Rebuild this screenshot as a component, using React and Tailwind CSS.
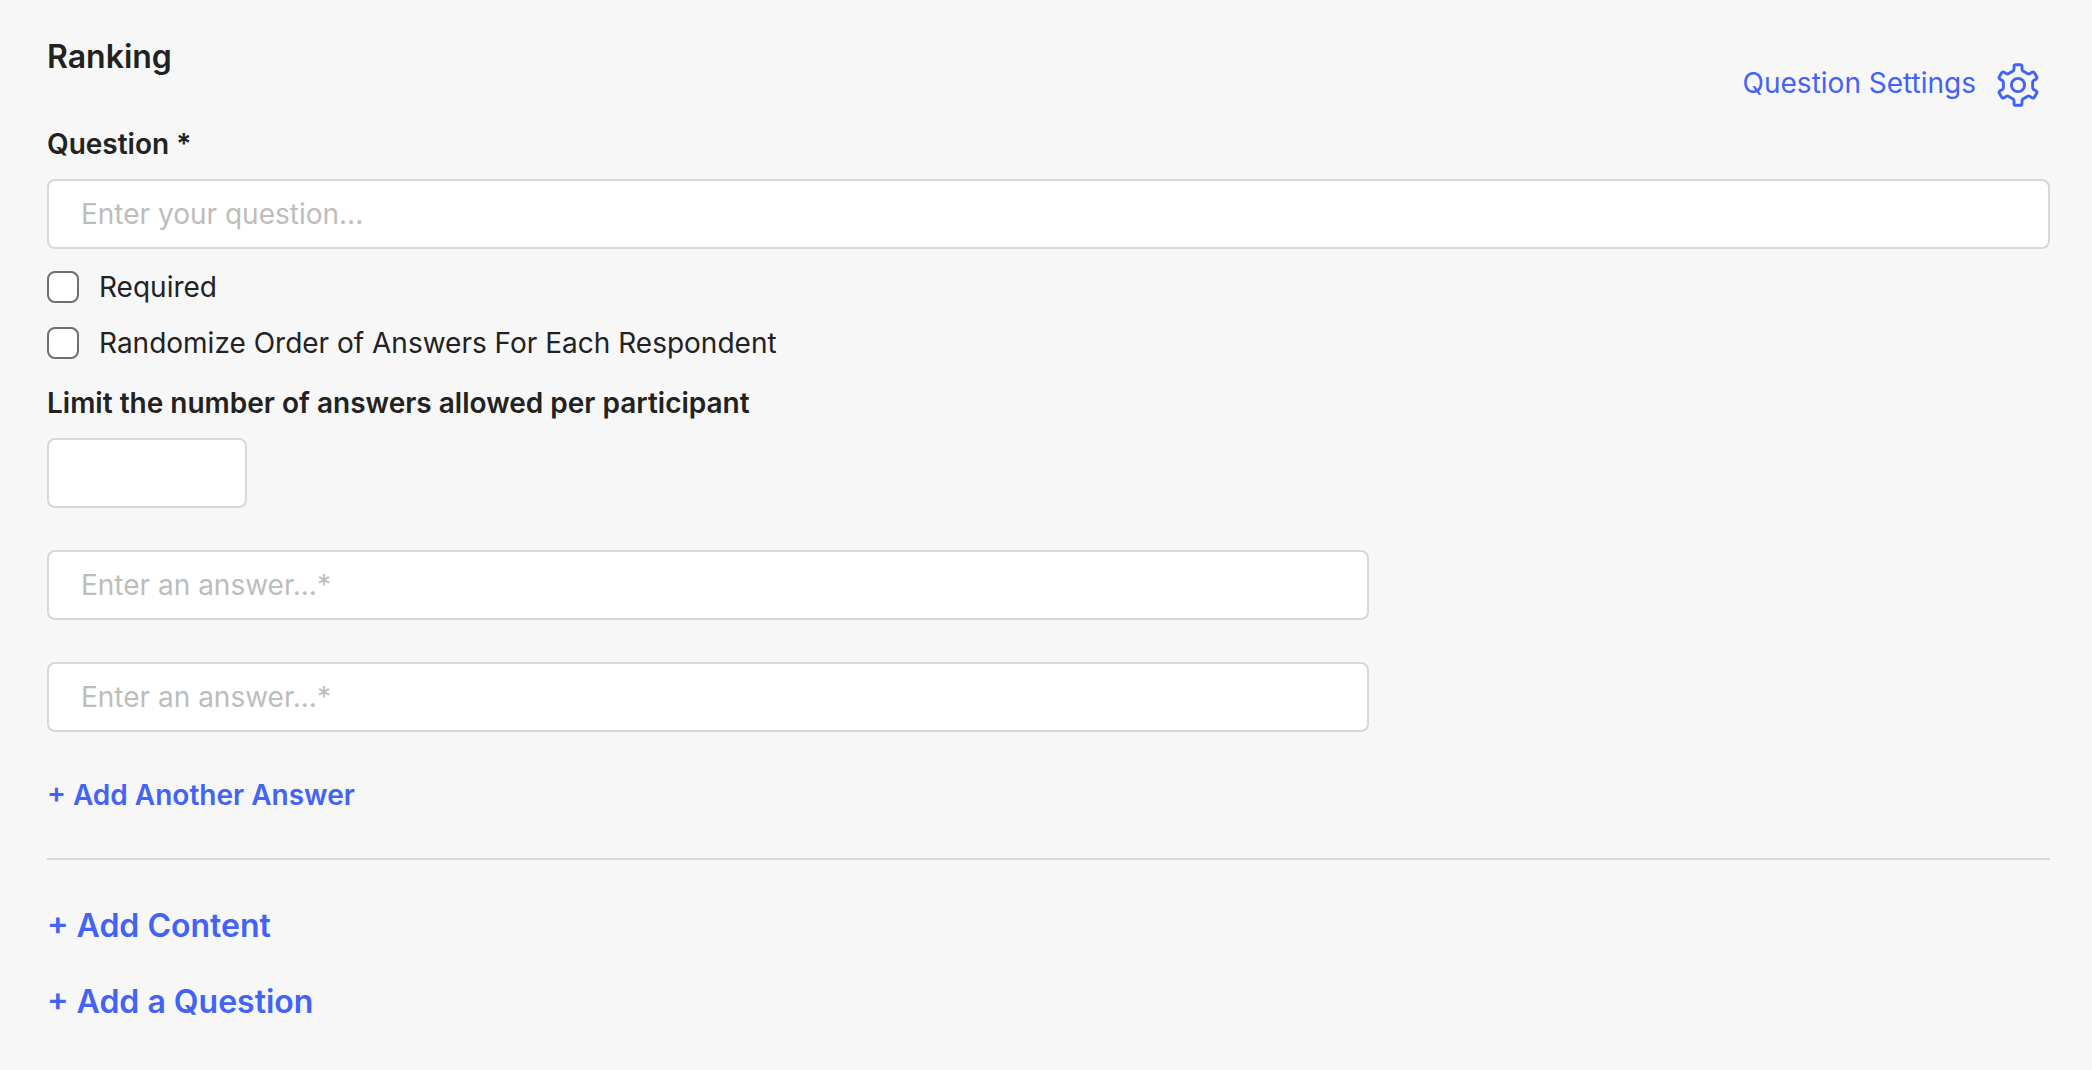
import React from "react";

const round = (n) => Math.round(n * 100) / 100;

// Outline of a six-toothed gear centred on 24,24, with rounded corners.
function gearPath() {
  const tooth = [
    { x: -4, y: -14.6, r: 1.1 },
    { x: -4, y: -20.3, r: 1.9 },
    { x: 4, y: -20.3, r: 1.9 },
    { x: 4, y: -14.6, r: 1.1 },
  ];
  const points = [];
  for (let i = 0; i < 6; i++) {
    const a = (i * Math.PI) / 3;
    tooth.forEach(({ x, y, r }) =>
      points.push({
        x: 24 + x * Math.cos(a) - y * Math.sin(a),
        y: 24 + x * Math.sin(a) + y * Math.cos(a),
        r,
      })
    );
  }
  const toward = (from, to) => {
    const d = Math.hypot(to.x - from.x, to.y - from.y);
    return `${round(from.x + ((to.x - from.x) * from.r) / d)} ${round(
      from.y + ((to.y - from.y) * from.r) / d
    )}`;
  };
  return (
    points
      .map((p, i) => {
        const prev = points[(i + points.length - 1) % points.length];
        const next = points[(i + 1) % points.length];
        return `${i ? "L" : "M"}${toward(p, prev)}Q${round(p.x)} ${round(p.y)} ${toward(p, next)}`;
      })
      .join("") + "Z"
  );
}

function GearIcon() {
  return (
    <svg viewBox="1 1 46 46" className="size-[46px]" fill="none" stroke="currentColor" strokeWidth="2.9" aria-hidden="true">
      <path d={gearPath()} />
      <circle cx="24" cy="24" r="6.6" />
    </svg>
  );
}

const field =
  "block h-[70px] rounded-lg border-2 border-[#d8d8d8] bg-white px-8 text-[28px] text-[#222] placeholder:text-[#bdbdbd]";

function Check({ id, children }) {
  return (
    <div className="flex items-center gap-5">
      <input
        id={id}
        type="checkbox"
        className="size-8 shrink-0 appearance-none rounded-lg border-2 border-[#6f6f6f] bg-white checked:bg-[#4263f5]"
      />
      <label htmlFor={id}>{children}</label>
    </div>
  );
}

export default function App() {
  return (
    <main className="min-h-screen bg-[#f7f7f7] pt-[33px] pr-[42px] pb-10 pl-[47px] font-['Inter',sans-serif] text-[28px] leading-[42px] text-[#222]">
      <header className="flex items-start justify-between">
        <div>
          <h1 className="text-[32px] leading-[48px] font-semibold">Ranking</h1>
          <label htmlFor="question" className="mt-[42px] block font-semibold">
            Question *
          </label>
        </div>
        <button type="button" className="mt-[29px] mr-[9px] flex items-start gap-[19px] text-[#4263f5]">
          Question Settings
          <GearIcon />
        </button>
      </header>

      <input id="question" type="text" placeholder="Enter your question..." className={`${field} mt-3.5 w-full`} />

      <div className="mt-[17px] flex flex-col gap-3.5">
        <Check id="required">Required</Check>
        <Check id="randomize">Randomize Order of Answers For Each Respondent</Check>
      </div>

      <label htmlFor="limit" className="mt-[18px] block font-semibold">
        Limit the number of answers allowed per participant
      </label>
      <input id="limit" type="text" inputMode="numeric" className={`${field} mt-3.5 w-[200px]`} />

      <div className="mt-[42px] flex w-[66%] flex-col gap-[42px]">
        <input type="text" aria-label="Answer 1" placeholder="Enter an answer...*" className={`${field} w-full`} />
        <input type="text" aria-label="Answer 2" placeholder="Enter an answer...*" className={`${field} w-full`} />
      </div>

      <button type="button" className="mt-[42px] block font-semibold text-[#4263f5]">
        + Add Another Answer
      </button>

      <hr className="mt-[42px] border-t-2 border-[#d8d8d8]" />

      <div className="mt-[42px] flex flex-col items-start gap-7 text-[32px] leading-[48px] font-semibold text-[#4263f5]">
        <button type="button">+ Add Content</button>
        <button type="button">+ Add a Question</button>
      </div>
    </main>
  );
}
